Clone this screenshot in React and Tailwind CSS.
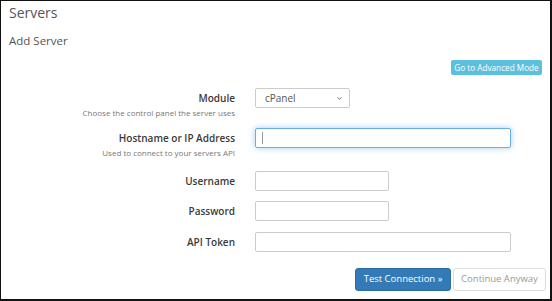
import { ChevronDown } from "lucide-react";

function Row({ label, help, children, className = "" }) {
  return (
    <div className={`flex items-start ${className}`}>
      <div className="w-[234px] flex flex-col items-end shrink-0">
        <div className="text-[10px] leading-[20px] font-semibold text-[#3a3a3a]">{label}</div>
        {help && <div className="text-[8px] leading-[10px] text-[#777]">{help}</div>}
      </div>
      <div className="ml-[20px]">{children}</div>
    </div>
  );
}

export default function App() {
  return (
    <div className="w-[552px] h-[301px] bg-white font-['Open_Sans',sans-serif] border-l border-t border-r-2 border-b-2 border-[#111] overflow-hidden">
      <div className="pl-[8px]">
        <h1 className="text-[14px] leading-[20px] pt-[2px] text-[#555]">Servers</h1>
        <h2 className="mt-[10px] text-[11.5px] leading-[16px] text-[#555]">Add Server</h2>
      </div>

      <div className="flex justify-end pr-[8px] mt-[11px]">
        <button className="w-[91px] h-[15px] rounded-[2px] bg-[#5bc0de] text-white text-[8.2px] leading-[15px] whitespace-nowrap">
          Go to Advanced Mode
        </button>
      </div>

      <Row label="Module" help="Choose the control panel the server uses" className="mt-[13px]">
        <div className="relative w-[95px] h-[20px] border border-[#ccc] rounded-[2px] text-[10px] leading-[18px] text-[#555] pl-[9px]">
          cPanel
          <ChevronDown className="absolute right-[6px] top-[6px] w-[7px] h-[7px] text-[#666]" strokeWidth={3} />
        </div>
      </Row>

      <Row label="Hostname or IP Address" help="Used to connect to your servers API" className="mt-[10px]">
        <div className="relative w-[256px] h-[20px] border border-[#66afe9] rounded-[2px] shadow-[0_0_6px_rgba(102,175,233,0.6)]">
          <span className="absolute left-[6px] top-[3px] w-px h-[12px] bg-[#999]" />
        </div>
      </Row>

      <Row label="Username" className="mt-[13px]">
        <div className="w-[134px] h-[20px] border border-[#ccc] rounded-[2px]" />
      </Row>

      <Row label="Password" className="mt-[10px]">
        <div className="w-[134px] h-[20px] border border-[#ccc] rounded-[2px]" />
      </Row>

      <Row label="API Token" className="mt-[11px]">
        <div className="w-[256px] h-[20px] border border-[#ccc] rounded-[2px]" />
      </Row>

      <div className="flex justify-end gap-[2px] pr-[4px] mt-[16px]">
        <button className="w-[96px] h-[23px] rounded-[3px] bg-[#337ab7] border border-[#2e6da4] text-white text-[9.5px]">
          Test Connection »
        </button>
        <button className="w-[93px] h-[23px] rounded-[3px] bg-white border border-[#ddd] text-[#999] text-[9.5px]">
          Continue Anyway
        </button>
      </div>
    </div>
  );
}
